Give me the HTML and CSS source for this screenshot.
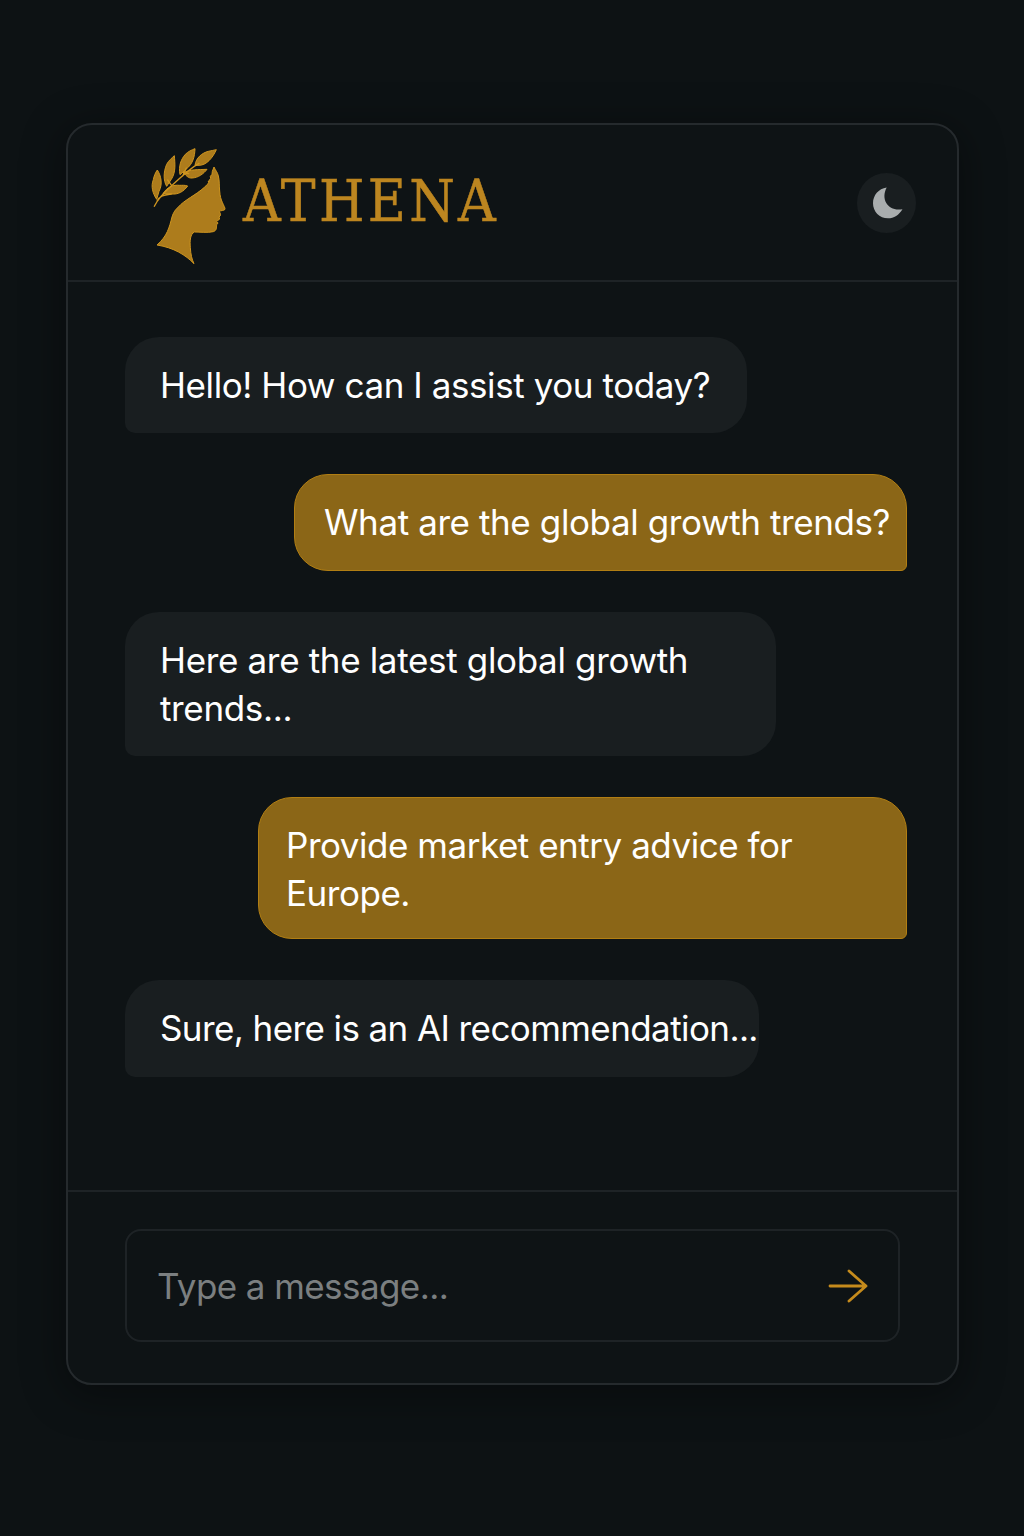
FILE: index.html
```html
<!DOCTYPE html>
<html lang="en">
<head>
<meta charset="utf-8">
<title>Athena</title>
<link rel="stylesheet" href="styles.css">
</head>
<body>
<main class="card">
  <header class="header">
    <div class="brand">
      <svg class="logo" viewBox="30 21 225 357" aria-hidden="true">
        <g fill="#ad7c1c" stroke="#cf951f" stroke-width="3" stroke-linejoin="round">
          <path d="M47 178C35 160 29 139 37 119C39 108 43 98 49 90C60 107 66 132 54 154Z"/>
          <path d="M77 139C67 122 67 96 77 73C83 61 93 54 100 47C102 72 105 96 91 118Z"/>
          <path d="M117 104C112 78 120 58 133 43C142 34 152 30 162 26C161 50 156 71 136 87Z"/>
          <path d="M162 76C165 53 183 39 202 34C210 31 218 32 226 29C215 54 196 76 174 76Z"/>
          <path d="M128 98C145 88 174 89 198 88C187 102 172 113 153 114C143 115 137 109 128 98Z"/>
          <path d="M66 161C79 140 97 134 116 136C124 136 132 135 140 138C128 155 111 164 91 162Z"/>
          <path fill="none" stroke-width="4" stroke-linecap="round" d="M40 199C51 175 71 155 95 134C117 116 138 91 174 70M48 184C55 169 65 165 91 162M92 137L80 120M125 108L136 84M127 98L143 101"/>
          <path d="M112 201C130 180 165 165 190 142C197 136 202 131 205 124L201 126L209 115L208 109L213 103L214 94L219 81C223 91 230 97 232 108C236 122 234 136 236 153C237 169 240 178 244 187C248 197 253 204 252 208C249 213 239 210 235 215C240 222 240 227 234 231L236 237C234 241 229 240 227 244C232 247 231 252 227 254C226 263 228 271 217 275C200 279 177 276 160 276C148 282 146 302 148 323C149 343 153 359 159 371C134 345 98 323 48 315C79 288 85 262 93 231C98 215 103 210 112 201Z"/>
        </g>
      </svg>
      <h1 class="title">ATHENA</h1>
    </div>
    <button class="theme" aria-label="Dark mode">
      <svg class="moon" viewBox="0 0 32 34"><path d="M15.7 1.5C9 14 18 26 31.5 23.2C28 29 23 32.3 17 32.3C8.500 32.300 2 25.500 2 17.200C2 9.500 7.500 2.500 15.700 1.500Z" fill="#a9adae"/></svg>
    </button>
  </header>
  <section class="chat">
    <p class="msg bot hello">Hello! How can I assist you today?</p>
    <p class="msg user question">What are the global growth trends?</p>
    <p class="msg bot latest">Here are the latest global growth trends...</p>
    <p class="msg user advice">Provide market entry advice for Europe.</p>
    <p class="msg bot sure">Sure, here is an AI recommendation...</p>
  </section>
  <footer class="footer">
    <div class="composer">
      <span class="placeholder">Type a message...</span>
      <svg class="send" viewBox="0 0 40 34" fill="none" stroke="#c58b1c" stroke-width="2.8" stroke-linecap="round" stroke-linejoin="round"><path d="M2 17H38M21 2L38 17L21 32"/></svg>
    </div>
  </footer>
</main>
</body>
</html>
```
FILE: styles.css
```css
* { box-sizing: border-box; }
body {
  margin: 0;
  min-height: 1536px;
  padding: 123px 66px 0;
  background: #0d1214;
  font-family: Inter, "Liberation Sans", sans-serif;
  color: #fff;
}
.card {
  display: flex;
  flex-direction: column;
  width: 893px;
  height: 1262px;
  border: 2px solid #252a2d;
  border-radius: 26px;
  background: #0e1315;
  box-shadow: 0 8px 40px 4px rgba(0, 0, 0, .35);
}
.header {
  display: flex;
  justify-content: space-between;
  height: 157px;
  padding: 22px 41px 0 83px;
  border-bottom: 2px solid #1e2326;
}
.brand { display: flex; }
.logo { width: 75px; height: 119px; }
.title {
  margin: 16px 0 0 17px;
  font: 400 58px/76px "DejaVu Serif Condensed", "DejaVu Serif", serif;
  font-stretch: condensed;
  letter-spacing: 3.3px;
  color: #bd8620;
  -webkit-text-stroke: .5px #bd8620;
}
.theme {
  display: grid;
  place-items: center;
  width: 59px;
  height: 60px;
  margin-top: 26px;
  padding: 0;
  border: 0;
  border-radius: 50%;
  background: #191e20;
}
.moon { width: 32px; height: 34px; }
.chat {
  display: flex;
  flex-direction: column;
  align-items: flex-start;
  gap: 41px;
  height: 908px;
  padding: 55px 50px 0 57px;
}
.msg {
  flex: none;
  margin: 0;
  padding: 24px 0 0 35px;
  font-size: 35px;
  line-height: 48px;
  letter-spacing: -.42px;
  white-space: nowrap;
}
.bot {
  background: #191e20;
  border-radius: 34px 34px 34px 10px;
}
.user {
  align-self: flex-end;
  background: #8b6617;
  border: 1px solid #b17e13;
  border-radius: 34px 34px 6px 34px;
}
.hello { width: 622px; height: 96px; }
.question { width: 613px; height: 97px; padding: 23px 0 0 29px; letter-spacing: -.4px; }
.latest { width: 651px; height: 144px; padding-right: 60px; letter-spacing: -.34px; white-space: normal; }
.advice { width: 649px; height: 142px; padding: 23px 80px 0 27px; letter-spacing: -.47px; white-space: normal; }
.sure { width: 634px; height: 97px; letter-spacing: -.59px; }
.footer {
  flex: 1;
  padding: 37px 57px 0;
  border-top: 2px solid #1e2326;
}
.composer {
  display: flex;
  align-items: center;
  justify-content: space-between;
  width: 775px;
  height: 113px;
  padding: 0 30px;
  border: 2px solid #1e2326;
  border-radius: 16px;
}
.placeholder {
  font-size: 35px;
  line-height: 48px;
  letter-spacing: -.58px;
  color: #7b7f80;
}
.send { width: 40px; height: 34px; }
```
